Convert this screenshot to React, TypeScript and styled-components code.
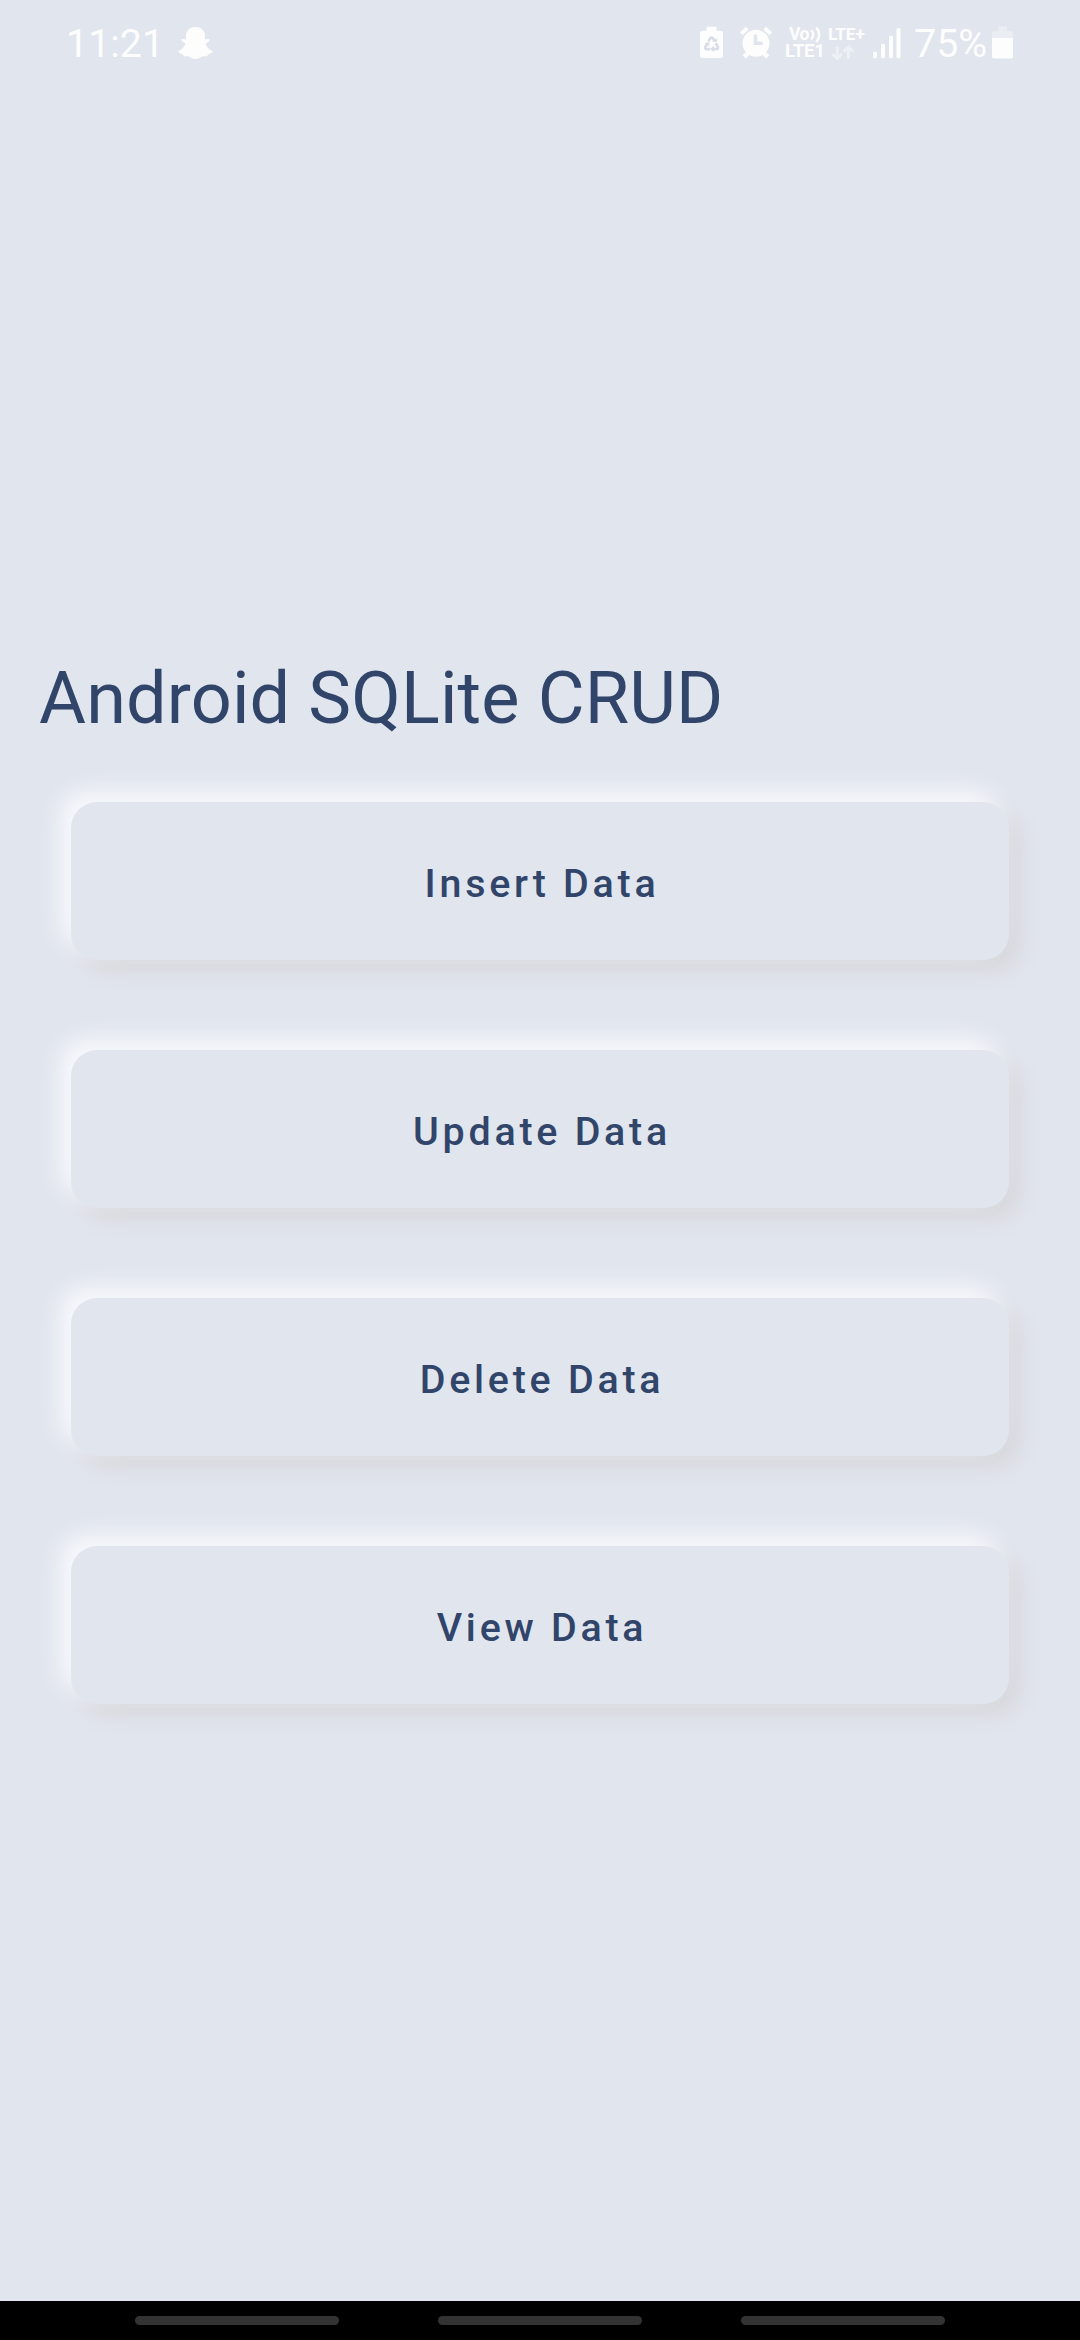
import React from "react";
import styled, { createGlobalStyle } from "styled-components";

const GlobalStyle = createGlobalStyle`
  * { box-sizing: border-box; }
  body { margin: 0; background: #e1e5ed; font-family: Roboto, "Liberation Sans", sans-serif; }
`;

const Screen = styled.div`
  display: flex;
  flex-direction: column;
  width: 1080px;
  height: 2340px;
  overflow: hidden;
  background: #e1e5ed;
  color: #31456a;
`;

const StatusBar = styled.header`
  display: flex;
  justify-content: space-between;
  height: 86px;
  padding: 26px 67px 0 66px;
  color: #fdfdfd;
`;

const StatusGroup = styled.div`
  display: flex;
  align-items: flex-start;
`;

const StatusText = styled.span<{ $gap: number; $width: number }>`
  width: ${(p) => p.$width}px;
  margin-left: ${(p) => p.$gap}px;
  font-size: 39.4px;
  line-height: 36px;
  white-space: nowrap;
`;

const Icon = styled.svg<{ $gap: number }>`
  display: block;
  flex: none;
  margin-left: ${(p) => p.$gap}px;
  fill: currentColor;
`;

const Network = styled.div`
  display: flex;
  flex-direction: column;
  width: 84px;
  margin-left: 13px;
  font-weight: 700;
  line-height: 17px;
`;

const NetworkLine = styled.div<{ $indent: number }>`
  display: flex;
  height: 17px;
  padding-left: ${(p) => p.$indent}px;
  white-space: nowrap;
`;

const NetworkLabel = styled.span<{ $width: number; $size: number; $tracking: number }>`
  flex: none;
  width: ${(p) => p.$width}px;
  font-size: ${(p) => p.$size}px;
  letter-spacing: ${(p) => p.$tracking}px;
`;

const Main = styled.main`
  display: flex;
  flex: 1;
  flex-direction: column;
  padding: 571px 71px 0;
`;

const Title = styled.h1`
  margin: 0 0 0 -32px;
  height: 145px;
  font-size: 72px;
  font-weight: 400;
  line-height: 84px;
  letter-spacing: 0.16px;
  white-space: nowrap;
`;

const ButtonList = styled.div`
  display: flex;
  flex-direction: column;
  gap: 90px;
`;

const SoftButton = styled.button`
  height: 158px;
  padding: 4px 0 0 4px;
  border: 0;
  border-radius: 26px;
  background: #e1e5ed;
  box-shadow: -11px -11px 22px #f7f9fc, 11px 11px 22px #d7d7db;
  color: inherit;
  font-family: inherit;
  font-size: 39.4px;
  font-weight: 500;
  letter-spacing: 3.75px;
`;

const NavBar = styled.nav`
  display: flex;
  justify-content: center;
  gap: 99px;
  height: 39px;
  padding-top: 15px;
  background: #000;
`;

const NavPill = styled.span`
  width: 204px;
  height: 9px;
  border-radius: 5px;
  background: #333;
`;

const actions = ["Insert Data", "Update Data", "Delete Data", "View Data"];

export default function App() {
  return (
    <Screen>
      <GlobalStyle />
      <StatusBar>
        <StatusGroup>
          <StatusText $gap={0} $width={95}>11:21</StatusText>
          <Icon $gap={17} width="35" height="34" viewBox="0 0 35 34">
            <path d="M17.5 1C11.5 1 8 5 8 10v3.4C6.500 13.500 5 12.500 3.800 13.300c-1.300 1.200 1.800 3.400 3.600 4.200C6.500 21 3.800 23.800.5 25c-.3 2 2.300 2.600 4.400 3.200.6 1 .5 2 1.600 2.100 1.600.1 3.500-.3 5.300.8 1.800 1.100 3.200 2 5.700 2s3.900-.9 5.700-2c1.800-1.100 3.700-.7 5.300-.8 1.100-.1 1-1.100 1.600-2.100 2.100-.6 4.700-1.200 4.400-3.200-3.300-1.200-6-4-6.900-7.500 1.800-.8 4.900-3 3.600-4.200-1.200-.8-2.700.2-4.200.1V10c0-5-3.500-9-9.500-9z" />
          </Icon>
        </StatusGroup>
        <StatusGroup>
          <Icon $gap={0} width="23" height="33" viewBox="0 0 23 33">
            <path d="M6.500.8h10v4H20.500a2.500 2.500 0 0 1 2.500 2.500v22.200a2.500 2.500 0 0 1-2.500 2.500h-18A2.500 2.500 0 0 1 0 29.500V7.300A2.500 2.500 0 0 1 2.500 4.800h4z" />
            <g transform="translate(1 1.600) scale(.92)">
              <path
                fill="none"
                stroke="#d9dee6"
                strokeWidth="3"
                d="M8 15l2-3.300q1.500-1.500 3 0l2 3.300M7 17l-2.300 4q-.5 2.300 2 2.500H10M16 17l2.300 4q.5 2.300-2 2.500H13"
              />
              <path fill="#d9dee6" d="M12.500 15.500h5v-4zM4 17.500l5-2v4.500zM14 19.500v7l-4-3.200z" />
            </g>
          </Icon>
          <Icon $gap={17} width="32" height="34" viewBox="0 0 32 34">
            <path
              fillRule="evenodd"
              d="M16 3.800a13.500 13.500 0 1 0 0 27A13.500 13.500 0 1 0 16 3.800zM13.700 8.500h3.600v7h5.500V19h-9.100z"
            />
            <path d="M6.300 26l3.200 3.200L5.800 32.400l-3.300-3.200zM25.700 26l-3.200 3.200 3.700 3.200 3.300-3.200z" />
            <path fill="none" stroke="currentColor" strokeWidth="4" d="M1.200 7.800L7.300 2.200M30.800 7.800L24.700 2.200" />
          </Icon>
          <Network>
            <NetworkLine $indent={4}>
              <NetworkLabel $width={21} $size={17.6} $tracking={-0.6}>Vo</NetworkLabel>
              <Icon $gap={0} width="18" height="17" viewBox="0 0 18 17">
                <path fill="none" stroke="currentColor" strokeWidth="2.300" d="M1.200 4q4 4.500 0 9.500M6.200 1.500q6 7 0 14.500" />
              </Icon>
              <NetworkLabel $width={40} $size={17.2} $tracking={-0.1}>LTE+</NetworkLabel>
            </NetworkLine>
            <NetworkLine $indent={0}>
              <NetworkLabel $width={46} $size={18.8} $tracking={-0.3}>LTE1</NetworkLabel>
              <Icon $gap={0} width="24" height="18" viewBox="0 0 24 18">
                <g fill="none" stroke="currentColor" strokeWidth="3" opacity=".45">
                  <path d="M6.200 3.800v12M1.400 10.800l4.800 4.800 4.800-4.800M17.500 15.700V4M12.700 8.700l4.800-4.800 4.800 4.800" />
                </g>
              </Icon>
            </NetworkLine>
          </Network>
          <Icon $gap={4} width="28" height="34" viewBox="0 0 28 34">
            <rect x="0" y="25.500" width="4" height="7" rx="1.800" />
            <rect x="8" y="17.500" width="4" height="15" rx="1.800" />
            <rect x="16" y="9.500" width="4" height="23" rx="1.800" />
            <rect x="23.500" y="2" width="4" height="30.500" rx="1.800" />
          </Icon>
          <StatusText $gap={13} $width={75}>75%</StatusText>
          <Icon $gap={3} width="21" height="33" viewBox="0 0 21 33">
            <path opacity=".35" d="M6 .5h9V5h4a2 2 0 0 1 2 2v5H0V7a2 2 0 0 1 2-2h4z" />
            <path d="M0 12h21v18.500a2 2 0 0 1-2 2H2a2 2 0 0 1-2-2z" />
          </Icon>
        </StatusGroup>
      </StatusBar>
      <Main>
        <Title>Android SQLite CRUD</Title>
        <ButtonList>
          {actions.map((label) => (
            <SoftButton key={label}>{label}</SoftButton>
          ))}
        </ButtonList>
      </Main>
      <NavBar>
        <NavPill />
        <NavPill />
        <NavPill />
      </NavBar>
    </Screen>
  );
}
